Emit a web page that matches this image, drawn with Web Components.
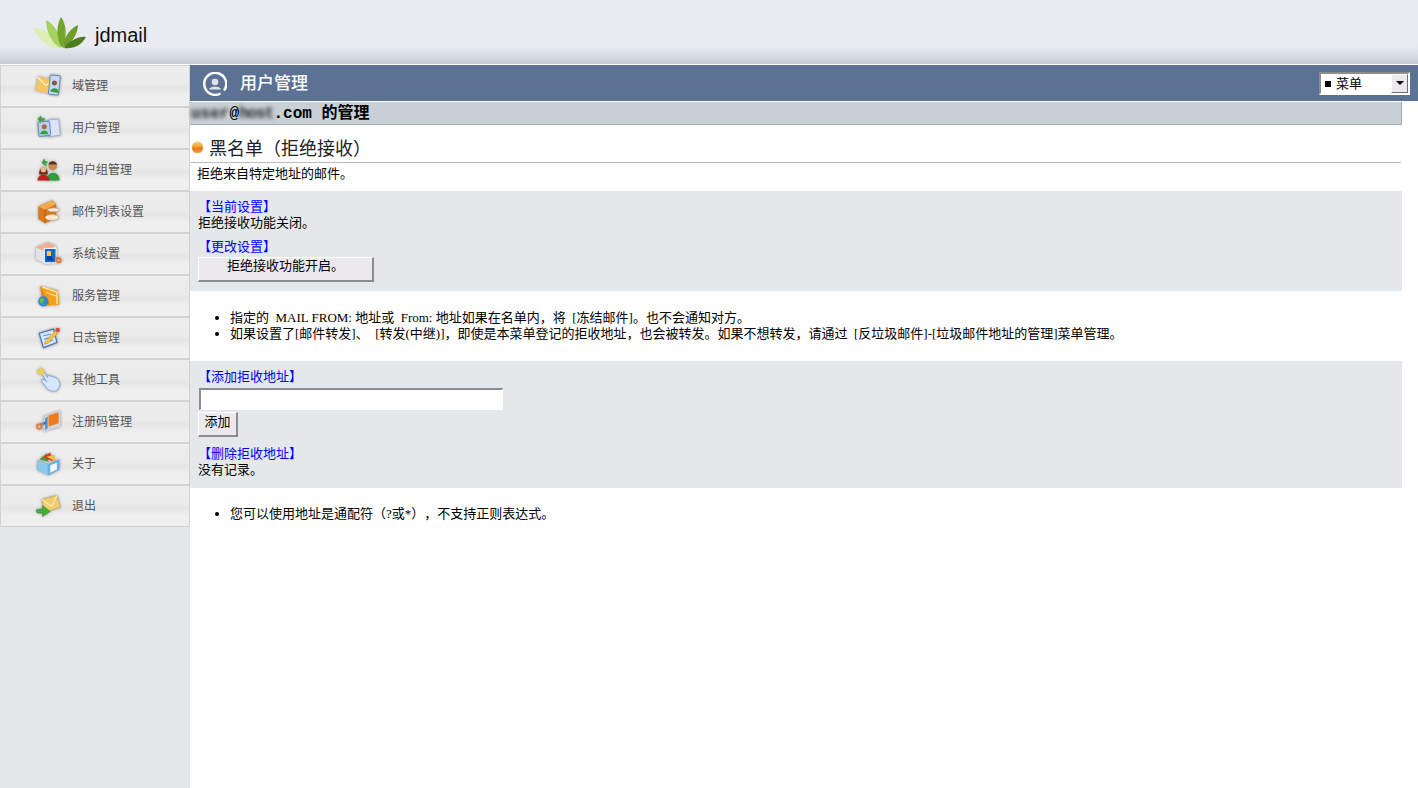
<!DOCTYPE html>
<html lang="zh">
<head>
<meta charset="utf-8">
<title>jdmail</title>
<style>
  html, body { margin: 0; height: 100%; background: #fff; }
  body {
    font: 13px/16px "Liberation Serif", "Noto Sans CJK SC", serif;
    color: #000;
    overflow: hidden;
    text-spacing-trim: space-all;
  }
  .page { display: flex; height: 723px; }
</style>
</head>
<body>
<app-header></app-header>
<div class="page">
  <side-menu>
    <menu-item label="域管理">
      <svg viewBox="0 0 32 32">
        <rect x="2" y="7" width="19" height="17" rx="1" fill="#f4c562" transform="rotate(12 11 15)"/>
        <path d="M3 6l10 10 8-6" fill="none" stroke="#fff3c4" stroke-width="1.500"/>
        <rect x="17" y="4" width="12" height="23" rx="1" fill="#c9d8f0" stroke="#5a7cb0" transform="rotate(6 23 15)"/>
        <circle cx="23" cy="13" r="3" fill="#8a5a30"/>
        <path d="M18 23c1-5 8-5 10-1l-1 3z" fill="#2fa33a"/>
      </svg>
    </menu-item>
    <menu-item label="用户管理">
      <svg viewBox="0 0 32 32">
        <path d="M16 7l12-1 2 19-14 2z" fill="#dbe4f6" stroke="#9db0d4"/>
        <rect x="4" y="9" width="14" height="17" rx="1" fill="#b8d0f0" stroke="#5a7cb0" transform="rotate(-5 11 17)"/>
        <circle cx="11" cy="15" r="3" fill="#a86c38"/>
        <path d="M6 24c1-6 9-6 10 0z" fill="#2fa33a"/>
        <path d="M3 6l4-4 1 3 4 0-1 3-4 0 0 3z" fill="#37a83c"/>
      </svg>
    </menu-item>
    <menu-item label="用户组管理">
      <svg viewBox="0 0 32 32">
        <circle cx="21" cy="12" r="5" fill="#c98a50"/>
        <path d="M16 10c1-5 9-5 10 0z" fill="#5a3418"/>
        <path d="M14 29c-1-12 16-12 15 0z" fill="#2c9e3c"/>
        <path d="M5 22c-1-11 11-12 10 0z" fill="#6a2c14"/>
        <circle cx="10" cy="16" r="3.400" fill="#e8b890"/>
        <path d="M3 29c0-9 14-9 14 0z" fill="#c0201c"/>
        <path d="M8 8l3-5 1 3 4 1-3 2 1 3-4-2z" fill="#37a83c"/>
      </svg>
    </menu-item>
    <menu-item label="邮件列表设置">
      <svg viewBox="0 0 32 32">
        <path d="M4 10l16-7 5 4v17l-13 6-8-5z" fill="#d9791c"/>
        <path d="M4 10l8 4 13-7-5-4z" fill="#f3a84a"/>
        <path d="M12 14v16" stroke="#a85a10" fill="none"/>
        <ellipse cx="22" cy="14" rx="7" ry="2.200" fill="#f4e9d8" stroke="#c9a070" stroke-width=".6"/>
        <ellipse cx="20" cy="23" rx="8" ry="3.400" fill="#f8ead4" stroke="#c9a070" stroke-width=".6"/>
      </svg>
    </menu-item>
    <menu-item label="系统设置">
      <svg viewBox="0 0 32 32">
        <path d="M1 9l14-6 10 4v18l-10 4-14-6z" fill="#dfe3e8"/>
        <path d="M1 9l10 4 14-6-10-4z" fill="#f0b090"/>
        <rect x="11" y="10" width="14" height="17" fill="#1466c8" stroke="#eef3f8" stroke-width="1.400"/>
        <path d="M14 13h5v6h-5z" fill="#f4c842"/>
        <path d="M14 19h5l3 5h-8z" fill="#0c3f90"/>
        <path d="M24 20l3 2" stroke="#e8782c" stroke-width="1.800"/>
        <circle cx="28" cy="24" r="2.600" fill="none" stroke="#e8782c" stroke-width="2"/>
      </svg>
    </menu-item>
    <menu-item label="服务管理">
      <svg viewBox="0 0 32 32">
        <path d="M6 5l21 5 2 17-19 1z" fill="#f8a01c"/>
        <path d="M9 6l17 6 0 14" fill="none" stroke="#fff0c0" stroke-width="1.600"/>
        <path d="M13 12l13 5" stroke="#ffd98a" stroke-width="1.400"/>
        <path d="M6 5l12 22-8 1z" fill="#e88a10"/>
        <circle cx="10" cy="23" r="6" fill="#2f86d6"/>
        <path d="M6 20c3-2 6 0 5 2s-3 1-2 4c-2 0-4-3-3-6z" fill="#6bc04c"/>
      </svg>
    </menu-item>
    <menu-item label="日志管理">
      <svg viewBox="0 0 32 32">
        <path d="M5 11l17-5 4 16-16 6z" fill="#d6e4f8" stroke="#4a78c0" stroke-width="1.400"/>
        <path d="M10 14l9-2M11 18l9-3M12 22l9-3" stroke="#5c8ad0" fill="none" stroke-width="1.200"/>
        <path d="M12 21l12-13 3 3-12 12-4 1z" fill="#f4c23c" stroke="#b88820" stroke-width=".5"/>
        <circle cx="27" cy="7" r="2.600" fill="#e0483c"/>
      </svg>
    </menu-item>
    <menu-item label="其他工具">
      <svg viewBox="0 0 32 32">
        <path d="M15 11l7 2c5 1 8 6 7 11l-3 5c-5 2-10 0-13-4l-5-7c-1-2 2-3 4-1l2 2-5-9c-1-2 2-3 3-1l3 5z" fill="#d6e6fb" stroke="#8aa8d8"/>
        <path d="M7 1l1.600 3.400 3.900.5-2.800 2.600.7 3.800-3.400-1.900-3.400 1.900.7-3.800-2.800-2.600 3.900-.5z" fill="#f4d23c"/>
      </svg>
    </menu-item>
    <menu-item label="注册码管理">
      <svg viewBox="0 0 32 32">
        <path d="M10 10l20-7v19l-20 6z" fill="#d2d5da"/>
        <path d="M16 9l12-4v13l-12 4z" fill="#f07c1c"/>
        <path d="M12 12l3-2v14l-3 2z" fill="#4a90e0"/>
        <path d="M6 20l8-3" stroke="#888" stroke-width="3"/>
        <circle cx="5" cy="22" r="2.800" fill="none" stroke="#e8782c" stroke-width="1.800"/>
        <circle cx="12" cy="18" r="1.600" fill="#2f6fd0"/>
      </svg>
    </menu-item>
    <menu-item label="关于">
      <svg viewBox="0 0 32 32">
        <path d="M5 11l9-7 2 10z" fill="#3fa03c"/>
        <path d="M9 9l9-6 3 10z" fill="#e8352c"/>
        <path d="M14 8l8-2 3 8z" fill="#f4c23c"/>
        <path d="M3 12l12 5 14-6v12l-13 7-13-6z" fill="#68b0e0"/>
        <path d="M3 12l12 5v13l-12-6z" fill="#8cc8ee"/>
        <path d="M18 18l8-3v8l-8 4z" fill="#f2f6fa"/>
      </svg>
    </menu-item>
    <menu-item label="退出">
      <svg viewBox="0 0 32 32">
        <path d="M8 9l18-5 4 14-18 6z" fill="#f0cc70" stroke="#c8a040" stroke-width=".6"/>
        <path d="M8 9l12 8 6-13" fill="none" stroke="#fff0c0" stroke-width="1.200"/>
        <path d="M2 21l7-1v-4l9 7-9 6v-4H4c-2 0-3-2-2-4z" fill="#3fae34" stroke="#2a8a24" stroke-width=".6"/>
      </svg>
    </menu-item>
  </side-menu>
  <main-area>
    <title-bar label="用户管理"></title-bar>
    <domain-head><span slot="user">user</span><span slot="host">host</span>.com 的管理</domain-head>
    <section-head>黑名单（拒绝接收）</section-head>
    <p-line>拒绝来自特定地址的邮件。</p-line>
    <gray-panel>
      <panel-legend>【当前设置】</panel-legend>
      <div>拒绝接收功能关闭。</div>
      <panel-legend gap>【更改设置】</panel-legend>
      <flat-button wide>拒绝接收功能开启。</flat-button>
    </gray-panel>
    <note-list top="19" bottom="19">
      <li>指定的&nbsp;&nbsp;MAIL FROM:&nbsp;地址或&nbsp;&nbsp;From:&nbsp;地址如果在名单内，将&nbsp;&nbsp;[冻结邮件]。也不会通知对方。</li>
      <li>如果设置了[邮件转发]、&nbsp;&nbsp;[转发(中继)]，即使是本菜单登记的拒收地址，也会被转发。如果不想转发，请通过&nbsp;&nbsp;[反垃圾邮件]-[垃圾邮件地址的管理]菜单管理。</li>
    </note-list>
    <gray-panel>
      <panel-legend>【添加拒收地址】</panel-legend>
      <text-box></text-box>
      <flat-button>添加</flat-button>
      <panel-legend gap>【删除拒收地址】</panel-legend>
      <div>没有记录。</div>
    </gray-panel>
    <note-list top="18" bottom="0">
      <li>您可以使用地址是通配符（?或*），不支持正则表达式。</li>
    </note-list>
  </main-area>
</div>

<script>
function el ( name, html ) {
  customElements.define( name, class extends HTMLElement {
    connectedCallback () {
      if ( this.shadowRoot ) return;
      this.attachShadow( { mode: 'open' } );
      this.shadowRoot.innerHTML = typeof html === 'function' ? html( this ) : html;
    }
  } );
}

el( 'app-header', /*html*/`
  <style>
    :host {
      display: flex;
      align-items: center;
      height: 64px;
      margin-bottom: 1px;
      box-sizing: border-box;
      padding: 0 0 0 33px;
      background: linear-gradient(#e8ebf0 0, #e8ebf0 46px, #dde1e7 53px, #c4cbd3 64px);
    }
    svg { width: 54px; height: 32px; display: block; margin-top: 2px; }
    span {
      margin-left: 8px;
      margin-top: 6px;
      font: 20px/24px "Liberation Sans", sans-serif;
      color: #111;
    }
  </style>
  <svg viewBox="0 0 54 32">
    <path d="M0 11c9 0 21 5 28 20C15 32 6 23 0 11z" fill="#dcefb4"/>
    <path d="M13 3c8 4 15 14 15 28C19 27 13 15 13 3z" fill="#a6d161"/>
    <path d="M28 0c5 7 7 19 1 31C23 21 23 9 28 0z" fill="#71a62a"/>
    <path d="M45 8c0 9-7 19-15 23 0-9 6-19 15-23z" fill="#6f9c2b"/>
    <path d="M53 20c-7-1-16 3-22 11 9 1 17-2 22-11z" fill="#4e7d1e"/>
  </svg>
  <span>jdmail</span>
` );

el( 'side-menu', /*html*/`
  <style>
    :host {
      display: flex;
      flex-direction: column;
      width: 190px;
      flex: none;
      background: #e4e8eb;
    }
  </style>
  <slot></slot>
` );

el( 'menu-item', host => /*html*/`
  <style>
    :host {
      display: flex;
      align-items: center;
      height: 42px;
      box-sizing: border-box;
      padding-left: 34px;
      border: 1px solid #d2d2d2;
      background: linear-gradient(#ededed 0, #ebebeb 45%, #e5e5e5 55%, #efefef 75%, #efefef 100%);
      font: 12px/16px "Noto Sans CJK SC", sans-serif;
      color: #555;
    }
    ::slotted(svg) {
      width: 27px;
      height: 27px;
      flex: none;
      margin-top: -2px;
      filter: drop-shadow(0 0 1.500px #8f8f8f);
    }
    span { margin: -3px 0 0 10px; }
  </style>
  <slot></slot>
  <span>${ host.getAttribute( 'label' ) }</span>
` );

el( 'main-area', /*html*/`
  <style>
    :host {
      display: block;
      flex: 1;
      min-width: 0;
    }
  </style>
  <slot></slot>
` );

el( 'title-bar', host => /*html*/`
  <style>
    :host {
      display: flex;
      align-items: center;
      height: 36px;
      box-sizing: border-box;
      padding: 0 8px 0 13px;
      background: #5b7294;
      color: #fff;
      font: 500 17px/24px "Noto Sans CJK SC", sans-serif;
    }
    svg { width: 24px; height: 24px; flex: none; margin-top: 2px; }
    span { margin: -2px 0 0 13px; flex: 1; }
    .sel {
      display: flex;
      align-items: center;
      width: 91px;
      height: 23px;
      box-sizing: border-box;
      background: #fff;
      border: 2px solid;
      border-color: #8c8c8c #fff #fff #8c8c8c;
      color: #000;
      font: 13px/16px "Noto Sans CJK SC", sans-serif;
    }
    .sel i { font-style: normal; flex: 1; padding-left: 4px; display: flex; align-items: center; gap: 5px; }
    .sel i b { width: 6px; height: 6px; background: #000; margin-top: 1px; }
    .arrow {
      width: 17px;
      height: 19px;
      box-sizing: border-box;
      background: #ece9ec;
      border: 1px solid;
      border-color: #fff #707070 #707070 #fff;
      display: flex;
      align-items: center;
      justify-content: center;
    }
    .arrow::after {
      content: "";
      border: 4px solid transparent;
      border-top-color: #000;
      border-bottom-width: 0;
    }
  </style>
  <svg viewBox="0 0 24 24">
    <path d="M17.500 21.500A11 11 0 1 1 21 18.500" fill="none" stroke="#fff" stroke-width="2.400"/>
    <circle cx="12" cy="10" r="3.300" fill="#fff" opacity=".8"/>
    <path d="M6 17.500c1-4 11-4 12 0z" fill="#fff" opacity=".8"/>
  </svg>
  <span>${ host.getAttribute( 'label' ) }</span>
  <div class="sel"><i><b></b>菜单</i><div class="arrow"></div></div>
` );

el( 'domain-head', /*html*/`
  <style>
    :host {
      display: block;
      height: 23px;
      margin: 1px 16px 0 0;
      box-sizing: border-box;
      padding-left: 1px;
      background: #c8d0d6;
      border: 1px solid #a4a9ad;
      border-width: 0 1px 1px 0;
      font: bold 16px/24px "Liberation Mono", "Noto Sans CJK SC", monospace;
    }
    ::slotted([slot="user"]), ::slotted([slot="host"]) { filter: blur(2px); opacity: .85; }
    ::slotted([slot="host"]) { letter-spacing: -1px; }
  </style><slot name="user"></slot>@<slot name="host"></slot><slot></slot>
` );

el( 'section-head', /*html*/`
  <style>
    :host {
      display: flex;
      align-items: center;
      height: 38px;
      box-sizing: border-box;
      margin: 0 17px 0 0;
      padding: 7px 0 0 2px;
      border-bottom: 1px solid #bdbdbd;
      font: 18px/24px "Noto Sans CJK SC", sans-serif;
      color: #222;
    }
    i {
      width: 11px;
      height: 11px;
      margin-right: 6px;
      border-radius: 50%;
      background: linear-gradient(#f6c75e 0, #f2b23a 35%, #e8761a 60%, #f2a23a 100%);
      box-shadow: 0 0 1px #8a6a30;
    }
  </style>
  <i></i><slot></slot>
` );

el( 'p-line', /*html*/`
  <style>
    :host {
      display: block;
      height: 28px;
      padding: 2px 0 0 7px;
      box-sizing: border-box;
      font-family: "Noto Sans CJK SC", sans-serif;
    }
  </style>
  <slot></slot>
` );

el( 'gray-panel', /*html*/`
  <style>
    :host {
      display: block;
      margin-right: 16px;
      padding: 7px 8px 11px;
      background: #e4e8eb;
      font-family: "Noto Sans CJK SC", sans-serif;
    }
  </style>
  <slot></slot>
` );

el( 'panel-legend', /*html*/`
  <style>
    :host { display: block; color: #00f; }
    :host([gap]) { margin-top: 8px; }
  </style>
  <slot></slot>
` );

el( 'flat-button', /*html*/`
  <style>
    :host {
      display: block;
      width: 40px;
      text-align: center;
      box-sizing: border-box;
      height: 25px;
      line-height: 15px;
      background: #ece9ec;
      border: 1px solid;
      border-color: #fff #8c8c8c #8c8c8c #fff;
      border-width: 1px 2px 2px 1px;
    }
    :host([wide]) {
      width: 176px;
      line-height: 14px;
      margin: 3px 0 -2px;
    }
  </style>
  <slot></slot>
` );

el( 'text-box', /*html*/`
  <style>
    :host {
      display: block;
      width: 304px;
      height: 22px;
      box-sizing: border-box;
      margin: 4px 0 2px 1px;
      background: #fff;
      border: 2px solid;
      border-color: #8c8c8c #fff #fff #8c8c8c;
      border-width: 2px 1px 1px 2px;
    }
  </style>
` );

el( 'note-list', host => /*html*/`
  <style>
    :host {
      display: block;
      padding: ${ host.getAttribute( 'top' ) }px 0 ${ host.getAttribute( 'bottom' ) }px 40px;
    }
    ::slotted(li) { display: list-item; }
  </style>
  <slot></slot>
` );
</script>
</body>
</html>
